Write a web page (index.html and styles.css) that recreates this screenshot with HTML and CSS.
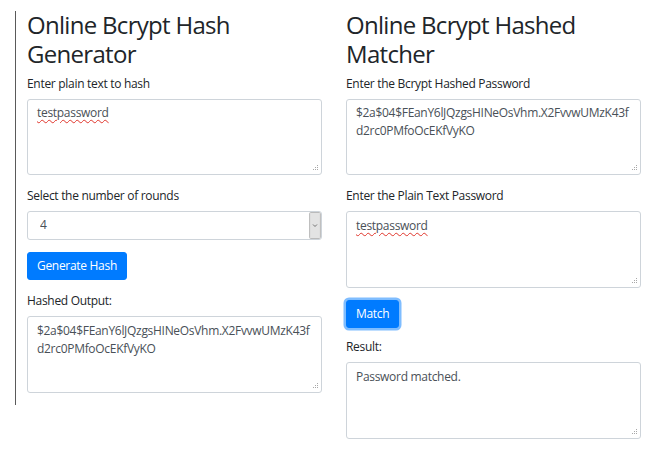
FILE: index.html
```html
<!DOCTYPE html>
<html lang="en">
<head>
<meta charset="utf-8">
<title>Online Bcrypt Hash Generator</title>
<link rel="stylesheet" href="styles.css">
</head>
<body>
<div class="page">
  <div class="row">
    <section class="col col-left">
      <h2 class="title">Online Bcrypt Hash Generator</h2>
      <div class="group">
        <label class="label" for="plain">Enter plain text to hash</label>
        <textarea id="plain" class="field spell">testpassword</textarea>
      </div>
      <div class="group">
        <label class="label" for="rounds">Select the number of rounds</label>
        <select id="rounds" class="select"><option>4</option></select>
      </div>
      <div class="group">
        <button class="btn" type="button">Generate Hash</button>
      </div>
      <div class="group">
        <label class="label" for="output">Hashed Output:</label>
        <textarea id="output" class="field">$2a$04$FEanY6lJQzgsHINeOsVhm.X2FvvwUMzK43fd2rc0PMfoOcEKfVyKO</textarea>
      </div>
    </section>
    <section class="col">
      <h2 class="title">Online Bcrypt Hashed Matcher</h2>
      <div class="group">
        <label class="label" for="hashed">Enter the Bcrypt Hashed Password</label>
        <textarea id="hashed" class="field">$2a$04$FEanY6lJQzgsHINeOsVhm.X2FvvwUMzK43fd2rc0PMfoOcEKfVyKO</textarea>
      </div>
      <div class="group">
        <label class="label" for="check">Enter the Plain Text Password</label>
        <textarea id="check" class="field spell">testpassword</textarea>
      </div>
      <div class="group group-tight">
        <button class="btn btn-focus" type="button">Match</button>
      </div>
      <div class="group">
        <label class="label" for="result">Result:</label>
        <textarea id="result" class="field">Password matched.</textarea>
      </div>
    </section>
  </div>
</div>
</body>
</html>
```
FILE: styles.css
```css
* { box-sizing: border-box; }

html, body {
  margin: 0;
  background: #fff;
}

body {
  font-family: "Open Sans", "Noto Sans", sans-serif;
  font-size: 12px;
  line-height: 18px;
  color: #212529;
  letter-spacing: -0.3px;
}

.page {
  padding: 11px 0 0 15px;
}

.row {
  display: flex;
  align-items: flex-start;
}

.col {
  width: 319px;
  padding: 0 12px;
}

.col-left {
  width: 319px;
  padding: 0 12px 0 11px;
  border-left: 1px solid #5a5a5a;
}

.title {
  margin: 0 0 6px;
  font-size: 24px;
  line-height: 28.8px;
  font-weight: 400;
  letter-spacing: -0.7px;
  color: #212529;
}

.group {
  margin-bottom: 12px;
}

.group-tight {
  margin-bottom: 10px;
}

.label {
  display: block;
  margin-bottom: 6px;
}

.field {
  display: block;
  width: 295px;
  height: 76.5px;
  margin: 0;
  padding: 4.5px 9px;
  font: inherit;
  letter-spacing: inherit;
  color: #495057;
  border: 1px solid #ced4da;
  border-radius: 3px;
  resize: none;
  overflow: hidden;
  word-break: break-all;
  background: #fff url("data:image/svg+xml,%3Csvg xmlns='http://www.w3.org/2000/svg' width='6' height='6' viewBox='0 0 6 6'%3E%3Cg fill='%23a8a8a8'%3E%3Crect x='5' y='0' width='1' height='1'/%3E%3Crect x='3' y='2' width='1' height='1'/%3E%3Crect x='5' y='2' width='1' height='1'/%3E%3Crect x='1' y='4' width='1' height='1'/%3E%3Crect x='3' y='4' width='1' height='1'/%3E%3Crect x='5' y='4' width='1' height='1'/%3E%3C/g%3E%3C/svg%3E") no-repeat right 3px bottom 3px / 6px 6px;
}

.spell {
  text-decoration: underline wavy #e0352b;
  text-decoration-thickness: 1px;
  text-underline-offset: 2px;
}

.select {
  display: block;
  width: 295px;
  height: 28.5px;
  margin: 0;
  padding: 0 14px 0 12px;
  font: inherit;
  color: #495057;
  border: 1px solid #ced4da;
  border-radius: 3px;
  -webkit-appearance: none;
  appearance: none;
  background: #fff url("data:image/svg+xml,%3Csvg xmlns='http://www.w3.org/2000/svg' width='12' height='27' viewBox='0 0 12 27'%3E%3Crect x='0.5' y='0.5' width='11' height='26' rx='1' fill='%23e3e3e3' stroke='%23b9b9b9'/%3E%3Cpath d='M4 12.5 L6 14.5 L8 12.5' fill='none' stroke='%23707070' stroke-width='1'/%3E%3C/svg%3E") no-repeat right 0 top 0 / 12px 26.5px;
}

.btn {
  display: block;
  height: 28.5px;
  padding: 4px 9px;
  font: inherit;
  letter-spacing: inherit;
  color: #fff;
  background: #007bff;
  border: 1px solid #007bff;
  border-radius: 3px;
  cursor: pointer;
}

.btn-focus {
  box-shadow: 0 0 0 2.5px rgba(0, 123, 255, 0.5);
}
```
